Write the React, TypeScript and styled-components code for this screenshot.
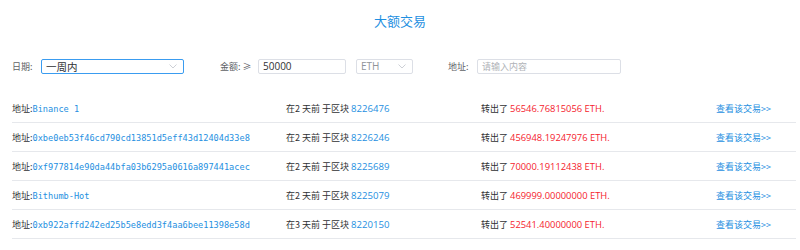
import styled, { createGlobalStyle } from 'styled-components'

const GlobalStyle = createGlobalStyle`
  html, body {
    margin: 0;
    overflow: hidden;
    background: #ffffff;
    font-family: "Noto Sans CJK SC", "Open Sans", sans-serif;
  }
`

const Page = styled.div`
  padding: 0 4px 0 12px;
`

const Title = styled.h1`
  margin: 0;
  padding: 12px 8px 0 0;
  height: 30px;
  text-align: center;
  font-size: 13px;
  font-weight: normal;
  line-height: 18px;
  color: #1e8fe1;
`

const FilterBar = styled.div`
  display: flex;
  align-items: center;
  margin-top: 16px;
  height: 16px;
  font-size: 9px;
  color: #606266;
`

const Field = styled.div<{ $width: number }>`
  display: flex;
  align-items: center;
  width: ${(p) => p.$width}px;
`

const Label = styled.span<{ $width: number }>`
  width: ${(p) => p.$width}px;
  flex: none;
`

const Box = styled.div<{ $width: number; $focus?: boolean }>`
  display: flex;
  align-items: center;
  justify-content: space-between;
  box-sizing: border-box;
  width: ${(p) => p.$width}px;
  height: 15px;
  padding: 0 6px 0 4px;
  border: 1px solid ${(p) => (p.$focus ? '#3a9cf0' : '#dcdfe6')};
  border-radius: 2px;
  font-family: "Open Sans", "Noto Sans CJK SC", sans-serif;
  font-size: 10px;
  color: #303133;
`

const Gap = styled.span`
  width: 10px;
`

const Option = styled.span`
  font-size: 10.5px;
`

const Placeholder = styled.span`
  font-size: 9px;
  color: #b0b3b8;
`

const Muted = styled.span`
  color: #909399;
`

const Chevron = () => (
  <svg width="8" height="5" viewBox="0 0 8 5">
    <path d="M0.5 0.5 L4 4 L7.5 0.5" fill="none" stroke="#c0c4cc" strokeWidth="0.8" />
  </svg>
)

const List = styled.div`
  margin-top: 20px;
`

const Row = styled.div`
  display: grid;
  grid-template-columns: 274px 195px 235px 1fr;
  align-items: center;
  height: 28px;
  border-bottom: 1px solid #e6e8ec;
  font-size: 9px;
  color: #303133;
`

const Addr = styled.span`
  font-family: "DejaVu Sans Mono", monospace;
  font-size: 8.6px;
  color: #1e8fe1;
`

const Blue = styled.span`
  font-family: "Open Sans", sans-serif;
  font-size: 9.6px;
  color: #1e8fe1;
`

const Amount = styled.span`
  font-family: "Open Sans", sans-serif;
  font-size: 9.4px;
  color: #f5222d;
`

const Link = styled.a`
  color: #1e8fe1;
  text-decoration: none;
  font-size: 9px;
`

const rows = [
  { addr: 'Binance 1', days: 2, block: '8226476', amount: '56546.76815056' },
  { addr: '0xbe0eb53f46cd790cd13851d5eff43d12404d33e8', days: 2, block: '8226246', amount: '456948.19247976' },
  { addr: '0xf977814e90da44bfa03b6295a0616a897441acec', days: 2, block: '8225689', amount: '70000.19112438' },
  { addr: 'Bithumb-Hot', days: 2, block: '8225079', amount: '469999.00000000' },
  { addr: '0xb922affd242ed25b5e8edd3f4aa6bee11398e58d', days: 3, block: '8220150', amount: '52541.40000000' },
]

const App = () => {
  return (
    <Page>
      <GlobalStyle />
      <Title>大额交易</Title>
      <FilterBar>
        <Field $width={208}>
          <Label $width={29}>日期:</Label>
          <Box $width={143} $focus>
            <Option>一周内</Option>
            <Chevron />
          </Box>
        </Field>
        <Field $width={228}>
          <Label $width={38}>金额: ≥</Label>
          <Box $width={88}>50000</Box>
          <Gap />
          <Box $width={57}>
            <Muted>ETH</Muted>
            <Chevron />
          </Box>
        </Field>
        <Field $width={200}>
          <Label $width={29}>地址:</Label>
          <Box $width={144}>
            <Placeholder>请输入内容</Placeholder>
          </Box>
        </Field>
      </FilterBar>
      <List>
        {rows.map((r) => (
          <Row key={r.block}>
            <span>
              地址:<Addr>{r.addr}</Addr>
            </span>
            <span>
              在{r.days} 天前 于区块 <Blue>{r.block}</Blue>
            </span>
            <span>
              转出了 <Amount>{r.amount} ETH.</Amount>
            </span>
            <Link href="#">查看该交易&gt;&gt;</Link>
          </Row>
        ))}
      </List>
    </Page>
  )
}

export default App
